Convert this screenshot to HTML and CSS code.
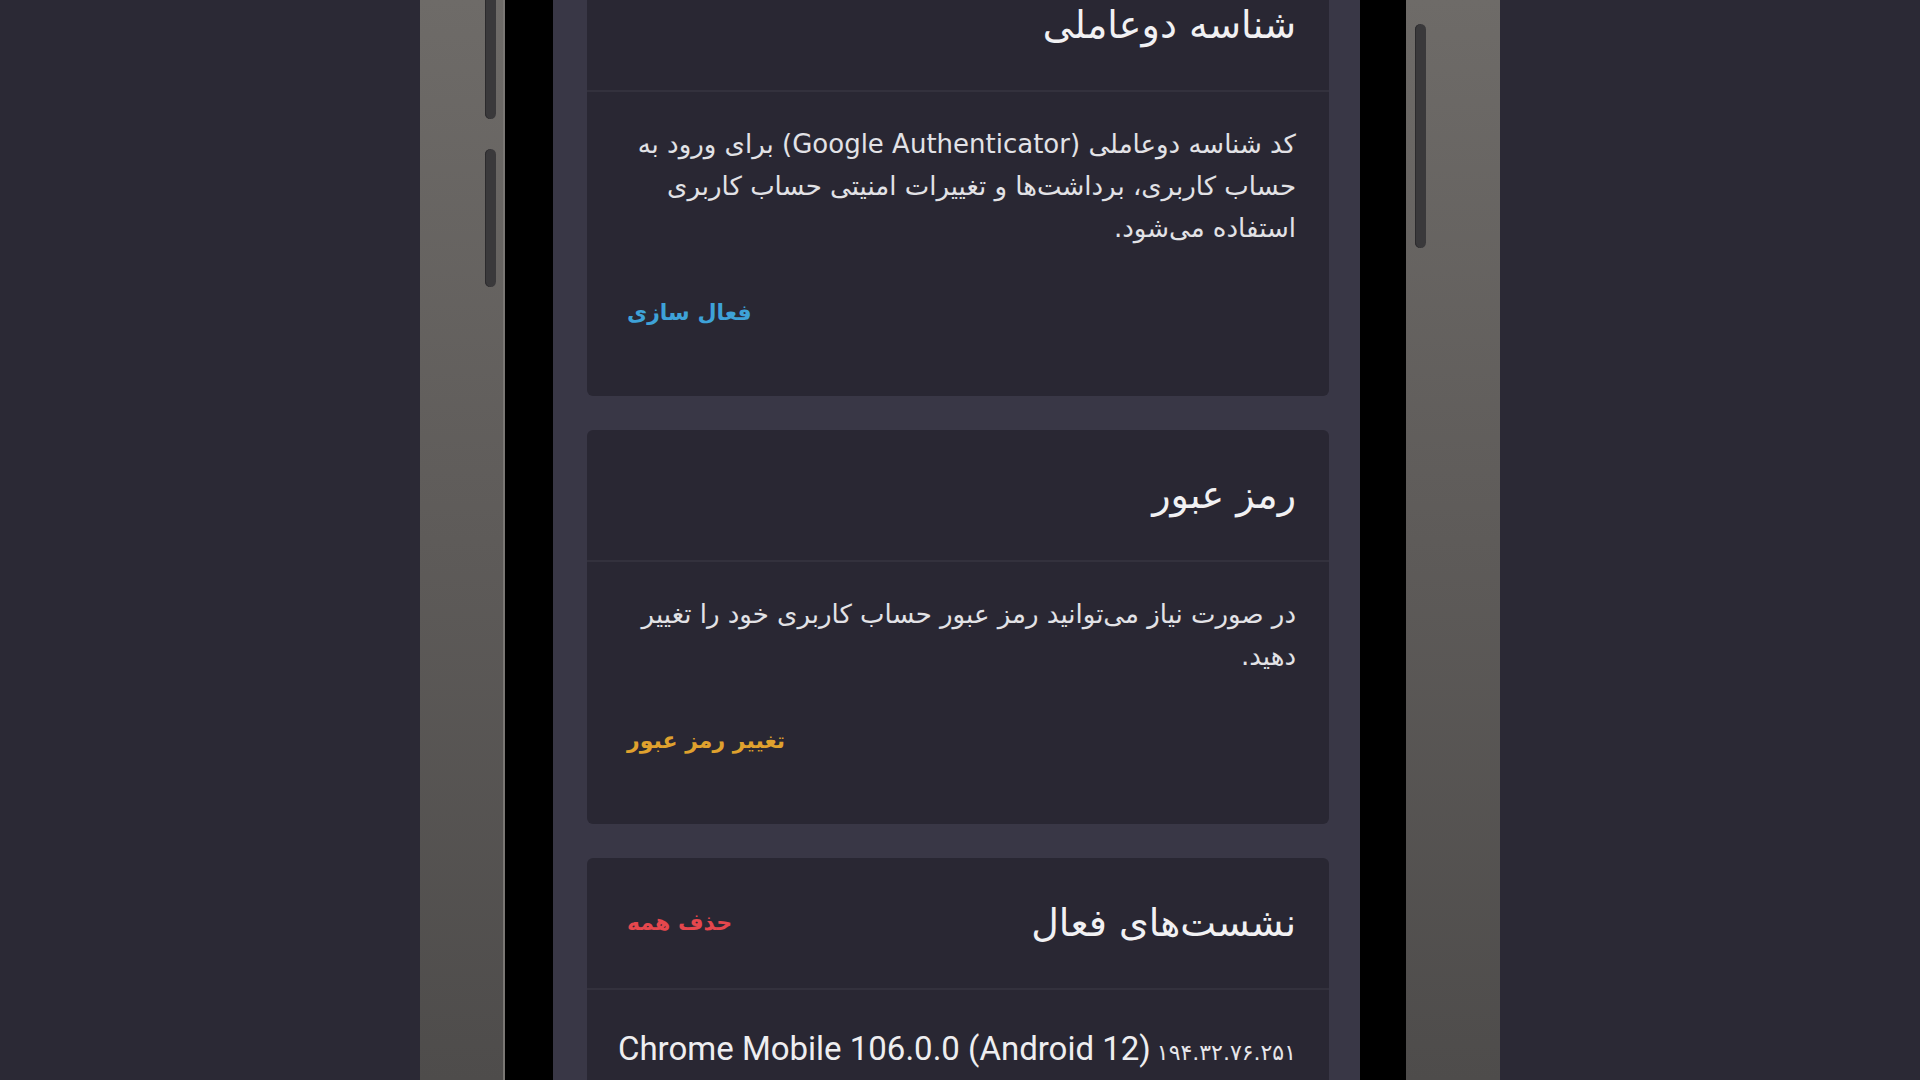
FILE: index.html
```html
<!DOCTYPE html>
<html lang="fa" dir="rtl">
<head>
  <meta charset="UTF-8" />
  <meta name="viewport" content="width=device-width, initial-scale=1" />
  <title>امنیت حساب</title>
  <link rel="stylesheet" href="styles.css">
</head>
<body>
  <div class="phone">
    <span class="side-btn btn-a"></span>
    <span class="side-btn btn-b"></span>
    <span class="side-btn btn-c"></span>
    <div class="bezel">
      <div class="screen">

        <div class="card first">
          <div class="card-head">
            <h2>شناسه دوعاملی</h2>
          </div>
          <div class="card-body">
            <p>کد شناسه دوعاملی (Google Authenticator) برای ورود به حساب کاربری، برداشت&zwnj;ها و تغییرات امنیتی حساب کاربری استفاده می&zwnj;شود.</p>
            <a class="link blue" href="#">فعال سازی</a>
          </div>
        </div>

        <div class="card">
          <div class="card-head">
            <h2>رمز عبور</h2>
          </div>
          <div class="card-body">
            <p>در صورت نیاز می&zwnj;توانید رمز عبور حساب کاربری خود را تغییر دهید.</p>
            <a class="link orange" href="#">تغییر رمز عبور</a>
          </div>
        </div>

        <div class="card">
          <div class="card-head">
            <h2>نشست&zwnj;های فعال</h2>
            <a class="link red" href="#">حذف همه</a>
          </div>
          <div class="card-body sessions">
            <div class="session">
              <span class="ip">۱۹۴.۳۲.۷۶.۲۵۱</span>
              <span class="agent" dir="ltr">Chrome Mobile 106.0.0 (Android 12)</span>
            </div>
          </div>
        </div>

      </div>
    </div>
  </div>
</body>
</html>
```

FILE: styles.css
```css
* { box-sizing: border-box; }
html, body { height: 100%; }
body {
  margin: 0;
  background: #2b2935;
  display: flex;
  justify-content: center;
  overflow: hidden;
  font-family: 'DejaVu Sans', 'Noto Sans', sans-serif;
}
.phone {
  position: relative;
  width: 1080px;
  height: 100vh;
  display: flex;
  padding: 0 94px 0 83px;
  background: linear-gradient(180deg, #6e6b68 0%, #5e5b59 50%, #4e4c4b 100%);
}
.side-btn {
  position: absolute;
  width: 11px;
  background: #3a393b;
  border-radius: 6px;
  box-shadow: inset 1px 0 0 #2b2a2c;
}
.btn-a { left: 65px; top: -6px; height: 125px; }
.btn-b { left: 65px; top: 149px; height: 138px; }
.btn-c { right: 74px; top: 24px; height: 224px; }
.bezel {
  flex: 1;
  background: #000;
  padding: 0 46px 0 48px;
  border-left: 2px solid #7a7774;
}
.screen {
  height: 100%;
  background: #393746;
  padding: 0 31px 0 34px;
  overflow: hidden;
}
.card {
  background: #292733;
  border-radius: 6px;
  margin-bottom: 34px;
}
.card.first { margin-top: -40px; }
.card-head {
  height: 132px;
  display: flex;
  align-items: center;
  justify-content: space-between;
  padding: 0 33px 0 40px;
  border-bottom: 2px solid #33313d;
}
.card-head h2 {
  margin: 0;
  font-size: 38px;
  font-weight: normal;
  color: #f1f1f3;
}
.card-body {
  padding: 31px 33px 62px 40px;
}
.card-body p {
  margin: 0 0 43px;
  font-size: 26px;
  line-height: 42px;
  color: #e2e2e6;
}
.link {
  display: block;
  width: max-content;
  margin-right: auto;
  font-size: 22px;
  line-height: 42px;
  font-weight: bold;
  text-decoration: none;
}
.card-head .link { margin: 0; }
.blue { color: #3ea2d8; }
.orange { color: #dfa12e; }
.red { color: #e5474d; }
.sessions { padding: 38px 33px 40px 20px; }
.session {
  display: flex;
  align-items: baseline;
  gap: 6px;
  white-space: nowrap;
}
.ip {
  font-size: 22px;
  color: #e6e6ea;
}
.agent {
  font-family: Roboto, 'Liberation Sans', sans-serif;
  font-size: 33px;
  line-height: 42px;
  color: #eeeef0;
}
```
